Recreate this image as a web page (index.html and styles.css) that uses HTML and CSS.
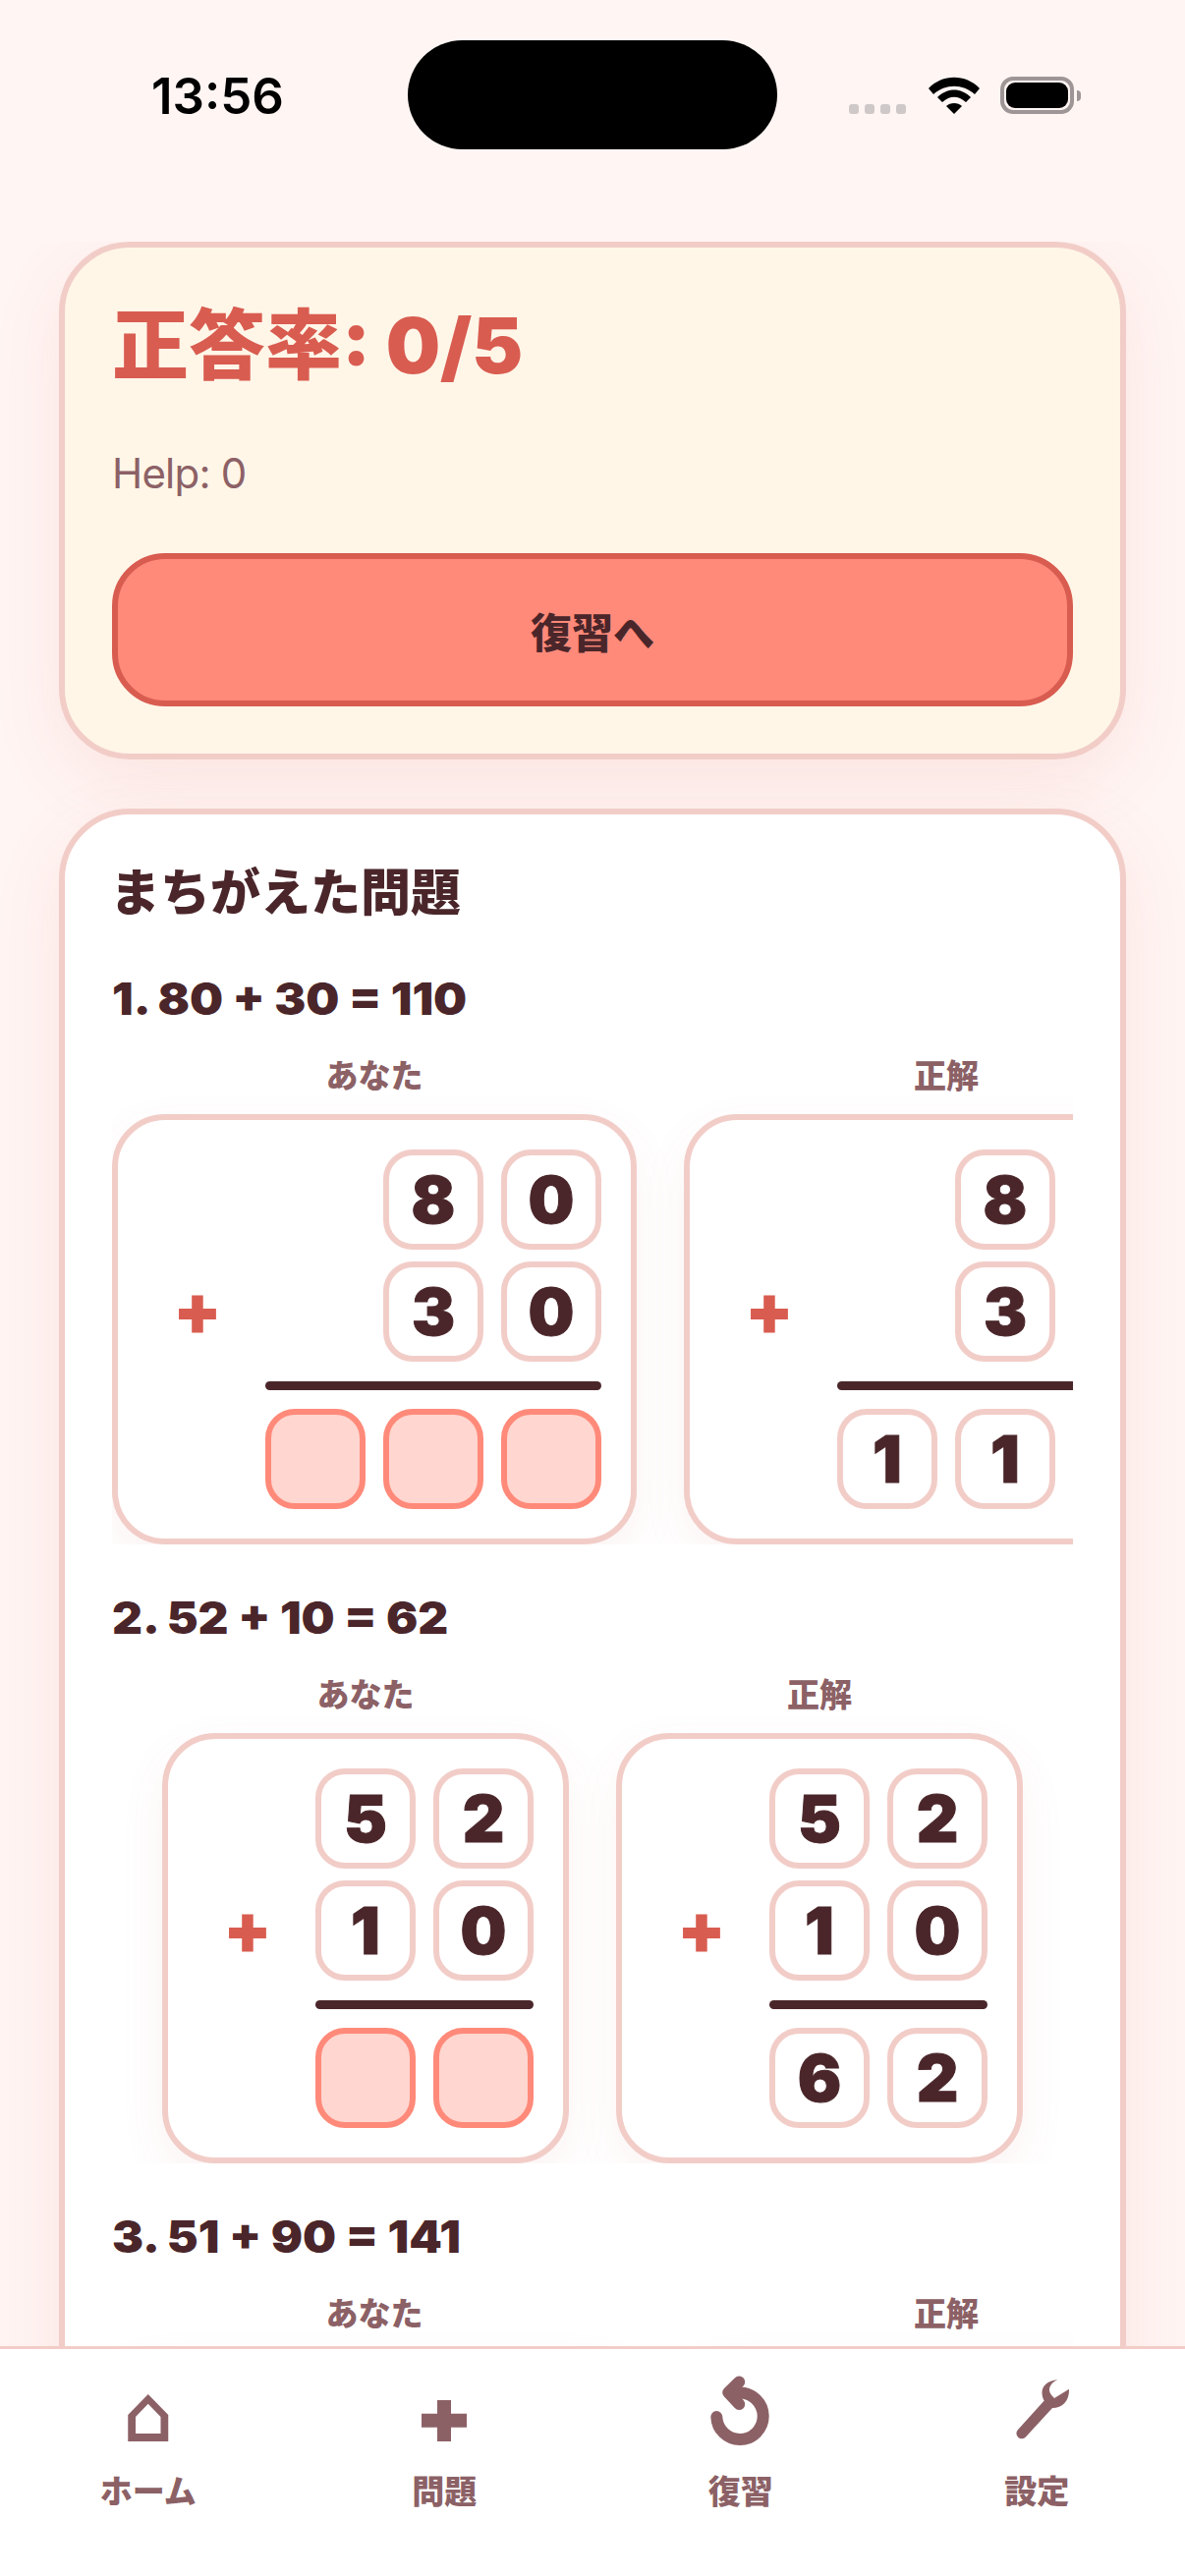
FILE: index.html
```html
<!DOCTYPE html>
<html lang="ja">
<head>
    <meta charset="UTF-8">
    <meta name="viewport" content="width=device-width, initial-scale=1.0">
    <title>結果</title>
    <link rel="stylesheet" href="styles.css">
</head>
<body>
    <div class="screen">
        <div class="status-bar">
            <span class="time">13:56</span>
            <div class="notch"></div>
            <div class="status-icons">
                <div class="signal"><i></i><i></i><i></i><i></i></div>
                <svg class="wifi" width="52" height="38" viewBox="0 0 52 38">
                    <path d="M0 12 C14 -3 38 -3 52 12 L47 18 C35 7 17 7 5 18 Z"/>
                    <path d="M9 21 C19 11 33 11 43 21 L38 26 C30 19 22 19 14 26 Z"/>
                    <path d="M18 30 C22 26 30 26 34 30 L26 38 Z"/>
                </svg>
                <div class="battery"><div class="battery-level"></div></div>
                <div class="battery-cap"></div>
            </div>
        </div>

        <div class="content">
            <div class="card summary">
                <h1>正答率: 0/5</h1>
                <p class="help">Help: 0</p>
                <button class="review-btn">復習へ</button>
            </div>

            <div class="card mistakes">
                <h2>まちがえた問題</h2>

                <div class="problem">
                    <h3>1. 80 + 30 = 110</h3>
                    <div class="compare">
                        <div class="side">
                            <div class="side-label">あなた</div>
                            <div class="sum cols-3">
                                <div></div><div></div><div class="cell">8</div><div class="cell">0</div>
                                <div class="op">+</div><div></div><div class="cell">3</div><div class="cell">0</div>
                                <div class="line"></div>
                                <div></div><div class="cell wrong"></div><div class="cell wrong"></div><div class="cell wrong"></div>
                            </div>
                        </div>
                        <div class="side">
                            <div class="side-label">正解</div>
                            <div class="sum cols-3">
                                <div></div><div></div><div class="cell">8</div><div class="cell">0</div>
                                <div class="op">+</div><div></div><div class="cell">3</div><div class="cell">0</div>
                                <div class="line"></div>
                                <div></div><div class="cell">1</div><div class="cell">1</div><div class="cell">0</div>
                            </div>
                        </div>
                    </div>
                </div>

                <div class="problem">
                    <h3>2. 52 + 10 = 62</h3>
                    <div class="compare">
                        <div class="side">
                            <div class="side-label">あなた</div>
                            <div class="sum cols-2">
                                <div></div><div class="cell">5</div><div class="cell">2</div>
                                <div class="op">+</div><div class="cell">1</div><div class="cell">0</div>
                                <div class="line"></div>
                                <div></div><div class="cell wrong"></div><div class="cell wrong"></div>
                            </div>
                        </div>
                        <div class="side">
                            <div class="side-label">正解</div>
                            <div class="sum cols-2">
                                <div></div><div class="cell">5</div><div class="cell">2</div>
                                <div class="op">+</div><div class="cell">1</div><div class="cell">0</div>
                                <div class="line"></div>
                                <div></div><div class="cell">6</div><div class="cell">2</div>
                            </div>
                        </div>
                    </div>
                </div>

                <div class="problem">
                    <h3>3. 51 + 90 = 141</h3>
                    <div class="compare">
                        <div class="side">
                            <div class="side-label">あなた</div>
                            <div class="sum cols-3"></div>
                        </div>
                        <div class="side">
                            <div class="side-label">正解</div>
                            <div class="sum cols-3"></div>
                        </div>
                    </div>
                </div>
            </div>
        </div>

        <nav class="tab-bar">
            <div class="tab">
                <svg class="tab-icon" viewBox="0 0 72 72">
                    <path fill-rule="evenodd" d="M35.75 19 L56.25 40 V67 H15.25 V40 Z M35.75 28.7 L23 42 V59 H48.5 V42 Z"/>
                </svg>
                <span>ホーム</span>
            </div>
            <div class="tab">
                <svg class="tab-icon" viewBox="0 0 72 72">
                    <path d="M29 25 H43 V38.7 H59 V52.7 H43 V67 H29 V52.7 H13 V38.7 H29 Z"/>
                </svg>
                <span>問題</span>
            </div>
            <div class="tab">
                <svg class="tab-icon" viewBox="0 0 72 72">
                    <path class="stroke" d="M11.3 42 A23.7 23.7 0 1 0 35 17.6"/>
                    <path class="stroke" d="M34.2 6.5 L23.2 17.2 L34.2 29"/>
                </svg>
                <span>復習</span>
            </div>
            <div class="tab">
                <svg class="tab-icon" viewBox="0 0 72 72">
                    <path d="M57.4 4.3 C47 5 41 11 41.5 18 C41.7 21 42.5 24 43.7 25.5 L16.6 55.4 A5.5 5.5 0 0 0 24.9 62.6 L52 33 C62 33 69.5 26 69 13.7 L54 23 C51 20 48.5 17 49 13 C50 9 53 6 57.4 4.3 Z"/>
                </svg>
                <span>設定</span>
            </div>
        </nav>
    </div>
</body>
</html>
```

FILE: styles.css
```css
* {
    box-sizing: border-box;
}
body {
    font-family: Inter, "Noto Sans CJK JP", sans-serif;
    margin: 0;
    padding: 0;
    background-color: #fff5f3;
    color: #4a262a;
}
.screen {
    display: flex;
    flex-direction: column;
    width: 1206px;
    height: 2622px;
    overflow: hidden;
}

/* status bar */
.status-bar {
    position: relative;
    flex-shrink: 0;
    display: flex;
    justify-content: space-between;
    height: 246px;
    padding: 66px 106px 0 154px;
}
.time {
    margin-top: 2px;
    font-size: 51px;
    font-weight: 600;
    line-height: 60px;
    color: #000;
}
.notch {
    position: absolute;
    top: 41px;
    left: 415px;
    width: 376px;
    height: 111px;
    border-radius: 56px;
    background-color: #000;
}
.status-icons {
    display: flex;
    align-items: flex-start;
    padding-top: 12px;
}
.signal {
    display: flex;
    gap: 6px;
    margin: 28px 23px 0 0;
}
.signal i {
    width: 10px;
    height: 10px;
    border-radius: 3px;
    background-color: #cfc8c8;
}
.wifi {
    fill: #000;
    margin-right: 21px;
}
.battery {
    width: 75px;
    height: 38px;
    padding: 2px;
    border: 4px solid #9e9696;
    border-radius: 13px;
}
.battery-level {
    width: 100%;
    height: 100%;
    background-color: #000;
    border-radius: 9px;
}
.battery-cap {
    width: 4px;
    height: 11px;
    margin: 14px 0 0 3px;
    border-radius: 0 4px 4px 0;
    background-color: #9e9696;
}

/* cards */
.content {
    flex: 1;
    min-height: 0;
    overflow: hidden;
    padding: 0 60px;
}
.card {
    border: 6px solid #f2cdc8;
    border-radius: 72px;
    padding: 48px;
    box-shadow: 0 24px 72px rgba(217, 92, 80, 0.1);
}
.summary {
    background-color: #fff6e8;
    margin-bottom: 50px;
}
.summary h1 {
    margin: 0;
    font-size: 78px;
    font-weight: 900;
    line-height: 104px;
    color: #d95c50;
}
.help {
    margin: 51px 0 54px;
    font-size: 42px;
    line-height: 54px;
    letter-spacing: -0.8px;
    color: #8c6166;
}
.review-btn {
    display: block;
    width: 100%;
    height: 156px;
    border: 6px solid #d95c50;
    border-radius: 54px;
    background-color: #ff8a7a;
    color: #4a262a;
    font-family: inherit;
    font-size: 42px;
    font-weight: 900;
}
.mistakes {
    background-color: #fff;
}
.mistakes h2 {
    margin: 0 0 49px -2px;
    font-size: 51px;
    font-weight: 900;
    line-height: 64px;
}
.problem {
    margin-bottom: 48px;
}
.problem h3 {
    margin: 0 0 27px;
    font-size: 45px;
    font-weight: 900;
    line-height: 54px;
    transform: scaleX(1.065);
    transform-origin: left center;
}
.compare {
    display: flex;
    justify-content: safe center;
    gap: 48px;
    overflow-x: auto;
    scrollbar-width: none;
}
.side {
    flex-shrink: 0;
}
.side-label {
    margin-bottom: 15px;
    text-align: center;
    font-size: 33px;
    font-weight: 900;
    line-height: 48px;
    color: #8c6166;
}

/* column addition */
.sum {
    display: grid;
    gap: 12px 18px;
    padding: 30px;
    background-color: #fff;
    border: 6px solid #f2cdc8;
    border-radius: 54px;
    box-shadow: 0 18px 48px rgba(217, 92, 80, 0.07);
}
.cols-2 {
    grid-template-columns: repeat(3, 102px);
}
.cols-3 {
    grid-template-columns: repeat(4, 102px);
}
.cell {
    display: flex;
    align-items: center;
    justify-content: center;
    height: 102px;
    border: 6px solid #f2cdc8;
    border-radius: 30px;
    font-size: 66px;
    font-weight: 900;
    -webkit-text-stroke: 1px #4a262a;
}
.cell.wrong {
    background-color: #ffd6d0;
    border-color: #ff8a7a;
}
.op {
    display: flex;
    align-items: center;
    justify-content: center;
    padding-bottom: 6px;
    font-size: 72px;
    font-weight: 900;
    color: #d95c50;
}
.line {
    grid-column: 2 / -1;
    height: 9px;
    margin: 8px 0 7px;
    border-radius: 6px;
    background-color: #4a262a;
}

/* tab bar */
.tab-bar {
    flex-shrink: 0;
    display: grid;
    grid-template-columns: repeat(4, 1fr);
    height: 234px;
    padding-top: 27px;
    background-color: #fff;
    border-top: 3px solid #f2cdc8;
}
.tab {
    display: flex;
    flex-direction: column;
    align-items: center;
    gap: 22px;
    font-size: 33px;
    font-weight: 900;
    line-height: 48px;
    color: #8c6166;
}
.tab-icon {
    width: 72px;
    height: 72px;
    fill: #8c6166;
}
.stroke {
    fill: none;
    stroke: #8c6166;
    stroke-width: 12;
    stroke-linecap: round;
    stroke-linejoin: round;
}
```
